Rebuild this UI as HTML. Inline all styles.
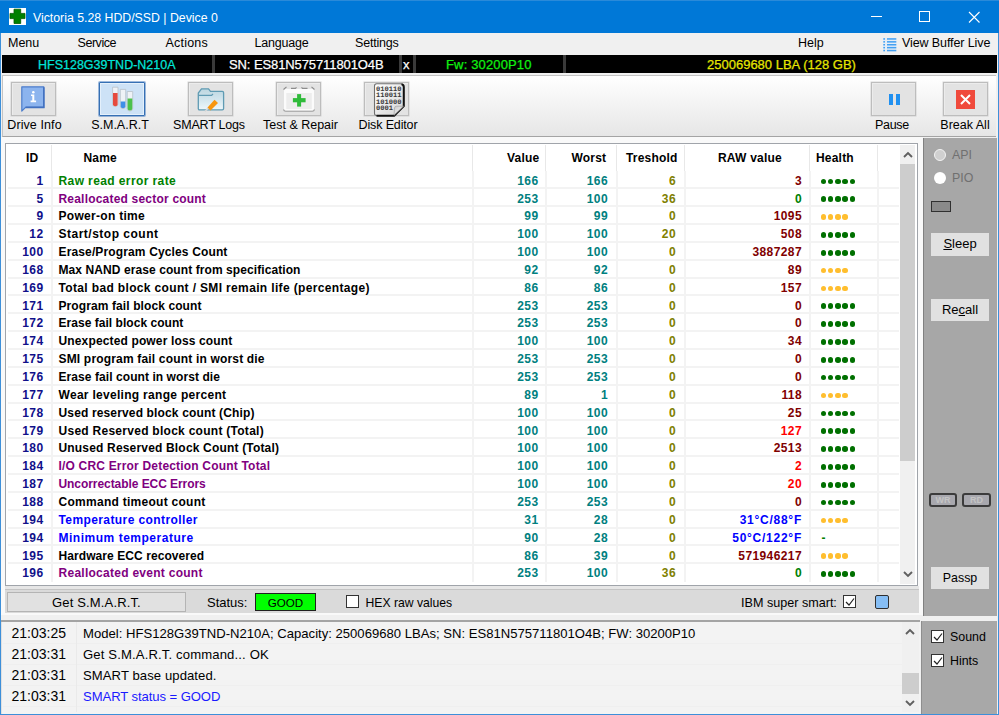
<!DOCTYPE html>
<html><head><meta charset="utf-8">
<style>
*{margin:0;padding:0;box-sizing:border-box}
html,body{width:999px;height:715px;overflow:hidden;background:#f0f0f0;font-family:"Liberation Sans",sans-serif;position:relative}
.a{position:absolute;white-space:nowrap}
#title{left:0;top:0;width:999px;height:33px;background:#0078d7}
#menubar{left:1px;top:33px;width:997px;height:22px;background:#f0f0f0}
.mi{position:absolute;top:36px;font-size:12.5px;color:#000;line-height:14px}
#bbar{left:2px;top:55px;width:995px;height:18px;background:#000}
.bt{position:absolute;top:56.8px;font-size:13px;line-height:16px;-webkit-text-stroke:0.25px currentColor}
.sep{position:absolute;top:55px;height:18px;width:3px;background:#3a3a3a}
#tool{left:2px;top:75px;width:994px;height:62px;background:linear-gradient(#ffffff,#e6e6e6);border-top:1px solid #c4c4c4;border-left:1px solid #c4c4c4;border-bottom:1px solid #a4a4a4}
.tb{position:absolute;top:82px;width:45px;height:34px;background:#e3e3e3;border:1px solid #bdbdbd;box-shadow:0 0 0 0.5px rgba(180,180,180,0.5),inset 1px 1px 0 #ececec}
.tl{position:absolute;top:116.7px;font-size:12.5px;line-height:16px;color:#000;text-align:center;width:100px}
#tbl{left:5px;top:143px;width:913px;height:443px;background:#fff;border:1px solid #a0a4aa}
.hdr{position:absolute;top:150px;font-size:12px;font-weight:700;line-height:16px;color:#000;letter-spacing:0.2px}
.vg{position:absolute;top:171px;width:2px;height:411px;background:#f3f3f3}
.vh{position:absolute;top:145px;width:1px;height:26px;background:#e8e8e8}
.hg{position:absolute;left:8px;width:891px;height:2px;background:#f3f3f3}
.row{position:absolute;left:0;width:900px;height:17.85px}
.c{position:absolute;top:1.8px;font-size:12px;font-weight:700;line-height:17.85px;white-space:nowrap}
.id{left:0;width:43.5px;text-align:right;color:#10108a;letter-spacing:0.4px}
.nm{left:58.5px;letter-spacing:0.35px}
.val{left:460px;width:78.5px;text-align:right;color:#008080;letter-spacing:0.4px}
.wst{left:540px;width:68px;text-align:right;color:#008080;letter-spacing:0.4px}
.thr{left:600px;width:76px;text-align:right;color:#808000;letter-spacing:0.4px}
.raw{left:690px;width:112px;text-align:right;letter-spacing:0.4px}
.hl{left:820.5px;top:0;height:17.85px}
.dg,.dy{position:relative;display:inline-block;width:5.6px;height:5.6px;border-radius:50%;margin-right:1.7px;top:1.6px;vertical-align:middle}
.dg{background:#007000}
.dy{background:#ffbe2e}
.dash{position:relative;top:1.8px;color:#008000;font-size:12px;font-weight:700;margin-left:1px;line-height:17.85px}
#sb1{left:899.5px;top:145px;width:15.5px;height:439px;background:#f0f0f0}
#thumb1{left:899.5px;top:164px;width:15.5px;height:297px;background:#cdcdcd}
#rpanel{left:923px;top:138px;width:74px;height:478px;background:#a7a7a7;border-left:1px solid #808080}
.pb{position:absolute;background:#e1e1e1;font-size:13px;line-height:22px;text-align:center;color:#000}
#status{left:5px;top:586px;width:914px;height:27px;background:#dadada;border-top:3px solid #e6e6e6;box-shadow:inset 0 1px 0 #c4c4c4}
#log{left:1px;top:620px;width:919px;height:94px;background:#f3f3f3;border-top:2px solid #a4a4a4;box-shadow:inset 1px 0 0 #e0e0e0}
.lt{position:absolute;font-size:13.1px;line-height:21px;color:#000}
.lg{position:absolute;left:3px;width:899px;height:1px;background:#efefef}
#lpanel{left:921px;top:621px;width:76px;height:93px;background:#a8a8a8;border-left:1px solid #8e8e8e}
.cb{position:absolute;width:13px;height:13px;background:#fff;border:1px solid #333}
</style></head><body>
<!-- title bar -->
<div class="a" id="title"></div>
<div class="a" style="left:0;top:0;width:999px;height:1px;background:#2a8ad9"></div>
<div class="a" style="left:9px;top:8px;width:17px;height:17px;background:#fff"></div>
<svg class="a" style="left:9px;top:8px" width="17" height="17" viewBox="0 0 17 17"><path d="M5 1.2H11.7V5.4H16V10.6H11.7V15.5H5V10.6H1V5.4H5Z" fill="#008000" stroke="#005a00" stroke-width="0.8"/></svg>
<div class="a" style="left:33px;top:9.7px;font-size:12.3px;line-height:16px;color:#fff">Victoria 5.28 HDD/SSD | Device 0</div>
<div class="a" style="left:871px;top:16px;width:11px;height:1px;background:#fff"></div>
<div class="a" style="left:919px;top:11px;width:11px;height:11px;border:1px solid #fff"></div>
<svg class="a" style="left:968px;top:10.5px" width="13" height="13" viewBox="0 0 13 13"><path d="M1 1L11.5 11.5M11.5 1L1 11.5" stroke="#fff" stroke-width="1.1"/></svg>
<!-- window border -->
<div class="a" style="left:0;top:33px;width:1px;height:682px;background:#3d8fd9"></div>
<div class="a" style="left:998px;top:33px;width:1px;height:682px;background:#3d8fd9"></div>
<div class="a" style="left:0;top:714px;width:999px;height:1px;background:#3d8fd9"></div>

<!-- menu -->
<div class="a" id="menubar"></div>
<span class="mi" style="left:8px">Menu</span>
<span class="mi" style="left:77.5px;letter-spacing:-0.45px">Service</span>
<span class="mi" style="left:165.5px;letter-spacing:0.2px">Actions</span>
<span class="mi" style="left:254.5px;letter-spacing:-0.2px">Language</span>
<span class="mi" style="left:355px;letter-spacing:-0.2px">Settings</span>
<span class="mi" style="left:798px">Help</span>
<svg class="a" style="left:883px;top:38px" width="14" height="14" viewBox="0 0 14 14"><rect x="0" y="0" width="13.5" height="13.5" fill="#dcebfa" opacity="0.6"/><g fill="#43a0f2"><rect x="0.3" y="0.2" width="1.7" height="1.5"/><rect x="4" y="0.2" width="9.3" height="1.5"/><rect x="0.3" y="3.1" width="1.7" height="1.5"/><rect x="4" y="3.1" width="9.3" height="1.5"/><rect x="0.3" y="6.0" width="1.7" height="1.5"/><rect x="4" y="6.0" width="9.3" height="1.5"/><rect x="0.3" y="8.9" width="1.7" height="1.5"/><rect x="4" y="8.9" width="9.3" height="1.5"/><rect x="0.3" y="11.8" width="1.7" height="1.5"/><rect x="4" y="11.8" width="9.3" height="1.5"/></g></svg>
<span class="mi" style="left:902px;letter-spacing:-0.1px">View Buffer Live</span>

<!-- black info bar -->
<div class="a" id="bbar"></div>
<div class="sep" style="left:212px"></div>
<div class="sep" style="left:399px"></div>
<div class="sep" style="left:413px"></div>
<div class="sep" style="left:563px"></div>
<span class="bt" style="left:38px;color:#00e4d8;font-size:12.5px">HFS128G39TND-N210A</span>
<span class="bt" style="left:229px;color:#fff;letter-spacing:-0.1px">SN: ES81N575711801O4B</span>
<span class="bt" style="left:403px;color:#fff">x</span>
<span class="bt" style="left:446px;color:#10f010;letter-spacing:0.15px">Fw: 30200P10</span>
<span class="bt" style="left:707px;color:#e6e600">250069680 LBA (128 GB)</span>

<!-- toolbar -->
<div class="a" id="tool"></div>
<div class="tb" style="left:11px"></div>
<div class="tb" style="left:99px;width:46px;background:#cde2f6;border:1px solid #3670b4;border-radius:1px;box-shadow:0 0 0 1px rgba(64,120,190,0.5),inset 0 0 0 1px #e4f0fb"></div>
<div class="tb" style="left:188px"></div>
<div class="tb" style="left:276px"></div>
<div class="tb" style="left:364px"></div>
<div class="tb" style="left:871px"></div>
<div class="tb" style="left:943px"></div>
<!-- icons -->
<svg class="a" style="left:21px;top:86px" width="24" height="26" viewBox="0 0 24 26">
<path d="M0.8 0.8H22.8V21.4H4.6L0.8 25Z" fill="#8cb4ee" stroke="#4d7dcb" stroke-width="1.2" stroke-linejoin="round"/>
<path d="M22.8 1.2V21.4H4.6" fill="none" stroke="#4271c0" stroke-width="1.6"/>
<circle cx="12.3" cy="6.2" r="1.25" fill="#fff"/>
<path d="M10 8.6H13.3V14.6H15.1V16.3H9.6V14.6H11.3V10.1H10Z" fill="#fff"/></svg>
<svg class="a" style="left:112px;top:86px" width="22" height="26" viewBox="0 0 22 26">
<path d="M0.6 1.2H6V18.2Q6 20.6 3.3 20.6Q0.6 20.6 0.6 18.2Z" fill="#eef2f6" stroke="#b8c0c8" stroke-width="0.8"/><path d="M1 7H5.6V18.2Q5.6 20.2 3.3 20.2Q1 20.2 1 18.2Z" fill="#e64a3e"/>
<path d="M8.3 3.4H13.7V20.2Q13.7 22.6 11 22.6Q8.3 22.6 8.3 20.2Z" fill="#eef2f6" stroke="#b8c0c8" stroke-width="0.8"/><path d="M8.7 15.5H13.3V20.2Q13.3 22.2 11 22.2Q8.7 22.2 8.7 20.2Z" fill="#3f8fe8"/>
<path d="M15.2 5.5H20.7V22.6Q20.7 25 18 25Q15.2 25 15.2 22.6Z" fill="#eef2f6" stroke="#b8c0c8" stroke-width="0.8"/><path d="M15.6 12.6H20.3V22.6Q20.3 24.6 18 24.6Q15.6 24.6 15.6 22.6Z" fill="#4cc14c"/></svg>
<svg class="a" style="left:197px;top:87px" width="28" height="26" viewBox="0 0 28 26">
<defs><linearGradient id="fg" x1="0" y1="0" x2="0" y2="1"><stop offset="0" stop-color="#bcd6e0"/><stop offset="0.5" stop-color="#d2e6ee"/><stop offset="1" stop-color="#eef7fa"/></linearGradient></defs>
<path d="M1.3 22V6L4.5 1.9H11.5L13.5 4.4H25.3Q26.6 4.4 26.6 5.8V21.5Q26.6 22.8 25.3 22.8H2.6Q1.3 22.8 1.3 21.5Z" fill="url(#fg)" stroke="#5f9bb3" stroke-width="1.3"/>
<path d="M1.3 8.4H14.5L16 7" fill="none" stroke="#5f9bb3" stroke-width="1.3"/>
<path d="M12 21.5L8.5 25L7.5 24L10.5 20.5Z" fill="#d8d8d8"/>
<path d="M10.5 20.5L17.5 12.7L21 16L13.5 23.5Z" fill="#f7960f"/></svg>
<svg class="a" style="left:282px;top:85px" width="34" height="28" viewBox="0 0 34 28">
<path d="M2 5.5Q2 4 3.5 4H30.5Q32 4 32 5.5V24Q32 25.5 30.5 25.5H3.5Q2 25.5 2 24Z" fill="#fbfbfb"/>
<rect x="4.3" y="8" width="25.5" height="16" fill="#ededed"/>
<path d="M1.5 4.5L4.5 1.8M32.5 4.5L29.5 1.8" stroke="#8c8c8c" stroke-width="1.1"/>
<path d="M9 3.3H13.5L14.5 2.3M19.5 2.3L20.5 3.3H25.5" fill="none" stroke="#8c8c8c" stroke-width="1.2"/>
<path d="M1.5 24.5Q2 26.2 3.5 26.2H30.5Q32 26.2 32.5 24.5" fill="none" stroke="#a0a0a0" stroke-width="1.1"/>
<rect x="15.1" y="9.1" width="4" height="12.5" fill="#2fbb3a"/><rect x="10.9" y="13.1" width="12.7" height="4.2" fill="#2fbb3a"/></svg>
<svg class="a" style="left:373px;top:82px" width="33" height="35" viewBox="0 0 33 35">
<defs><linearGradient id="dg" x1="0" y1="0" x2="1" y2="1"><stop offset="0" stop-color="#ffffff"/><stop offset="1" stop-color="#d4d4d4"/></linearGradient>
<linearGradient id="de" x1="0" y1="0" x2="1" y2="1"><stop offset="0" stop-color="#c8c8c8"/><stop offset="1" stop-color="#ffffff"/></linearGradient></defs>
<path d="M1.5 4Q1.5 1.8 3.7 1.8H27.5Q30.5 1.8 30.5 4.8V24L21 33.5H3.7Q1.5 33.5 1.5 31.3Z" fill="url(#dg)" stroke="#707070" stroke-width="1.1"/>
<path d="M28.5 2.2Q30.8 2.5 30.8 5V24.2L21.2 33.8H3.5" fill="none" stroke="#111" stroke-width="2"/>
<g font-family="Liberation Mono" font-size="6.8" font-weight="700" fill="#3a3a3a" style="text-rendering:geometricPrecision;-webkit-font-smoothing:antialiased">
<text x="3" y="8.9" textLength="25.5" lengthAdjust="spacingAndGlyphs">010110</text>
<text x="3" y="15.2" textLength="25.5" lengthAdjust="spacingAndGlyphs">110011</text>
<text x="3" y="21.6" textLength="25.5" lengthAdjust="spacingAndGlyphs">101000</text>
<text x="3" y="27.9" textLength="17" lengthAdjust="spacingAndGlyphs">0001</text></g>
<path d="M21 33.3L21.5 26Q21.8 24.2 23.5 24.2H30.5Z" fill="url(#de)" stroke="#9a9a9a" stroke-width="0.6"/></svg>
<div class="a" style="left:889px;top:94px;width:4px;height:11px;background:#2090f0"></div>
<div class="a" style="left:896px;top:94px;width:4px;height:11px;background:#2090f0"></div>
<div class="a" style="left:956px;top:90px;width:19px;height:19px;background:#f04a3c"></div>
<svg class="a" style="left:956px;top:90px" width="19" height="19" viewBox="0 0 19 19"><path d="M5 5L14 14M14 5L5 14" stroke="#fff" stroke-width="2"/></svg>
<span class="tl" style="left:-15.5px;letter-spacing:0.1px">Drive Info</span>
<span class="tl" style="left:70px">S.M.A.R.T</span>
<span class="tl" style="left:159px;letter-spacing:-0.2px">SMART Logs</span>
<span class="tl" style="left:250.5px">Test &amp; Repair</span>
<span class="tl" style="left:338px;letter-spacing:-0.15px">Disk Editor</span>
<span class="tl" style="left:842px;letter-spacing:-0.3px">Pause</span>
<span class="tl" style="left:915px">Break All</span>

<!-- table -->
<div class="a" style="left:1px;top:137px;width:922px;height:478px;background:#f9f9f9"></div>
<div class="a" id="tbl"></div>
<div class="a" style="left:7px;top:145px;width:892px;height:26px;background:#fff"></div>
<div class="vh" style="left:51px"></div>
<div class="vh" style="left:472px"></div>
<div class="vh" style="left:545px"></div>
<div class="vh" style="left:616px"></div>
<div class="vh" style="left:684px"></div>
<div class="vh" style="left:809px"></div>
<div class="vh" style="left:877px"></div>
<div class="vg" style="left:51px"></div>
<div class="vg" style="left:472px"></div>
<div class="vg" style="left:545px"></div>
<div class="vg" style="left:616px"></div>
<div class="vg" style="left:684px"></div>
<div class="vg" style="left:809px"></div>
<div class="vg" style="left:877px"></div>
<div class="hg" style="top:187.35px"></div>
<div class="hg" style="top:205.20px"></div>
<div class="hg" style="top:223.05px"></div>
<div class="hg" style="top:240.90px"></div>
<div class="hg" style="top:258.75px"></div>
<div class="hg" style="top:276.60px"></div>
<div class="hg" style="top:294.45px"></div>
<div class="hg" style="top:312.30px"></div>
<div class="hg" style="top:330.15px"></div>
<div class="hg" style="top:348.00px"></div>
<div class="hg" style="top:365.85px"></div>
<div class="hg" style="top:383.70px"></div>
<div class="hg" style="top:401.55px"></div>
<div class="hg" style="top:419.40px"></div>
<div class="hg" style="top:437.25px"></div>
<div class="hg" style="top:455.10px"></div>
<div class="hg" style="top:472.95px"></div>
<div class="hg" style="top:490.80px"></div>
<div class="hg" style="top:508.65px"></div>
<div class="hg" style="top:526.50px"></div>
<div class="hg" style="top:544.35px"></div>
<div class="hg" style="top:562.20px"></div>
<span class="hdr" style="left:26px">ID</span>
<span class="hdr" style="left:83.5px">Name</span>
<span class="hdr" style="left:507px">Value</span>
<span class="hdr" style="left:571.5px">Worst</span>
<span class="hdr" style="left:626px">Treshold</span>
<span class="hdr" style="left:718px">RAW value</span>
<span class="hdr" style="left:816px">Health</span>
<div class="row" style="top:170.90px"><span class="c id">1</span><span class="c nm" style="color:#008000;letter-spacing:0.4px">Raw read error rate</span><span class="c val">166</span><span class="c wst">166</span><span class="c thr">6</span><span class="c raw" style="color:#800000">3</span><span class="c hl"><i class="dg"></i><i class="dg"></i><i class="dg"></i><i class="dg"></i><i class="dg"></i></span></div>
<div class="row" style="top:188.75px"><span class="c id">5</span><span class="c nm" style="color:#800080;letter-spacing:0.202px">Reallocated sector count</span><span class="c val">253</span><span class="c wst">100</span><span class="c thr">36</span><span class="c raw" style="color:#008000">0</span><span class="c hl"><i class="dg"></i><i class="dg"></i><i class="dg"></i><i class="dg"></i><i class="dg"></i></span></div>
<div class="row" style="top:206.60px"><span class="c id">9</span><span class="c nm" style="color:#000000;letter-spacing:0.292px">Power-on time</span><span class="c val">99</span><span class="c wst">99</span><span class="c thr">0</span><span class="c raw" style="color:#800000">1095</span><span class="c hl"><i class="dy"></i><i class="dy"></i><i class="dy"></i><i class="dy"></i></span></div>
<div class="row" style="top:224.45px"><span class="c id">12</span><span class="c nm" style="color:#000000;letter-spacing:0.497px">Start/stop count</span><span class="c val">100</span><span class="c wst">100</span><span class="c thr">20</span><span class="c raw" style="color:#800000">508</span><span class="c hl"><i class="dg"></i><i class="dg"></i><i class="dg"></i><i class="dg"></i><i class="dg"></i></span></div>
<div class="row" style="top:242.30px"><span class="c id">100</span><span class="c nm" style="color:#000000;letter-spacing:0.138px">Erase/Program Cycles Count</span><span class="c val">100</span><span class="c wst">100</span><span class="c thr">0</span><span class="c raw" style="color:#800000">3887287</span><span class="c hl"><i class="dg"></i><i class="dg"></i><i class="dg"></i><i class="dg"></i><i class="dg"></i></span></div>
<div class="row" style="top:260.15px"><span class="c id">168</span><span class="c nm" style="color:#000000;letter-spacing:0.084px">Max NAND erase count from specification</span><span class="c val">92</span><span class="c wst">92</span><span class="c thr">0</span><span class="c raw" style="color:#800000">89</span><span class="c hl"><i class="dy"></i><i class="dy"></i><i class="dy"></i><i class="dy"></i></span></div>
<div class="row" style="top:278.00px"><span class="c id">169</span><span class="c nm" style="color:#000000;letter-spacing:0.35px">Total bad block count / SMI remain life (percentage)</span><span class="c val">86</span><span class="c wst">86</span><span class="c thr">0</span><span class="c raw" style="color:#800000">157</span><span class="c hl"><i class="dy"></i><i class="dy"></i><i class="dy"></i><i class="dy"></i></span></div>
<div class="row" style="top:295.85px"><span class="c id">171</span><span class="c nm" style="color:#000000;letter-spacing:0.098px">Program fail block count</span><span class="c val">253</span><span class="c wst">253</span><span class="c thr">0</span><span class="c raw" style="color:#800000">0</span><span class="c hl"><i class="dg"></i><i class="dg"></i><i class="dg"></i><i class="dg"></i><i class="dg"></i></span></div>
<div class="row" style="top:313.70px"><span class="c id">172</span><span class="c nm" style="color:#000000;letter-spacing:0.036px">Erase fail block count</span><span class="c val">253</span><span class="c wst">253</span><span class="c thr">0</span><span class="c raw" style="color:#800000">0</span><span class="c hl"><i class="dg"></i><i class="dg"></i><i class="dg"></i><i class="dg"></i><i class="dg"></i></span></div>
<div class="row" style="top:331.55px"><span class="c id">174</span><span class="c nm" style="color:#000000;letter-spacing:0.142px">Unexpected power loss count</span><span class="c val">100</span><span class="c wst">100</span><span class="c thr">0</span><span class="c raw" style="color:#800000">34</span><span class="c hl"><i class="dg"></i><i class="dg"></i><i class="dg"></i><i class="dg"></i><i class="dg"></i></span></div>
<div class="row" style="top:349.40px"><span class="c id">175</span><span class="c nm" style="color:#000000;letter-spacing:0.176px">SMI program fail count in worst die</span><span class="c val">253</span><span class="c wst">253</span><span class="c thr">0</span><span class="c raw" style="color:#800000">0</span><span class="c hl"><i class="dg"></i><i class="dg"></i><i class="dg"></i><i class="dg"></i><i class="dg"></i></span></div>
<div class="row" style="top:367.25px"><span class="c id">176</span><span class="c nm" style="color:#000000;letter-spacing:0.071px">Erase fail count in worst die</span><span class="c val">253</span><span class="c wst">253</span><span class="c thr">0</span><span class="c raw" style="color:#800000">0</span><span class="c hl"><i class="dg"></i><i class="dg"></i><i class="dg"></i><i class="dg"></i><i class="dg"></i></span></div>
<div class="row" style="top:385.10px"><span class="c id">177</span><span class="c nm" style="color:#000000;letter-spacing:0.296px">Wear leveling range percent</span><span class="c val">89</span><span class="c wst">1</span><span class="c thr">0</span><span class="c raw" style="color:#800000">118</span><span class="c hl"><i class="dy"></i><i class="dy"></i><i class="dy"></i><i class="dy"></i></span></div>
<div class="row" style="top:402.95px"><span class="c id">178</span><span class="c nm" style="color:#000000;letter-spacing:0.147px">Used reserved block count (Chip)</span><span class="c val">100</span><span class="c wst">100</span><span class="c thr">0</span><span class="c raw" style="color:#800000">25</span><span class="c hl"><i class="dg"></i><i class="dg"></i><i class="dg"></i><i class="dg"></i><i class="dg"></i></span></div>
<div class="row" style="top:420.80px"><span class="c id">179</span><span class="c nm" style="color:#000000;letter-spacing:0.272px">Used Reserved block count (Total)</span><span class="c val">100</span><span class="c wst">100</span><span class="c thr">0</span><span class="c raw" style="color:#ff0000">127</span><span class="c hl"><i class="dg"></i><i class="dg"></i><i class="dg"></i><i class="dg"></i><i class="dg"></i></span></div>
<div class="row" style="top:438.65px"><span class="c id">180</span><span class="c nm" style="color:#000000;letter-spacing:0.176px">Unused Reserved Block Count (Total)</span><span class="c val">100</span><span class="c wst">100</span><span class="c thr">0</span><span class="c raw" style="color:#800000">2513</span><span class="c hl"><i class="dg"></i><i class="dg"></i><i class="dg"></i><i class="dg"></i><i class="dg"></i></span></div>
<div class="row" style="top:456.50px"><span class="c id">184</span><span class="c nm" style="color:#800080;letter-spacing:0.188px">I/O CRC Error Detection Count Total</span><span class="c val">100</span><span class="c wst">100</span><span class="c thr">0</span><span class="c raw" style="color:#ff0000">2</span><span class="c hl"><i class="dg"></i><i class="dg"></i><i class="dg"></i><i class="dg"></i><i class="dg"></i></span></div>
<div class="row" style="top:474.35px"><span class="c id">187</span><span class="c nm" style="color:#800080;letter-spacing:-0.063px">Uncorrectable ECC Errors</span><span class="c val">100</span><span class="c wst">100</span><span class="c thr">0</span><span class="c raw" style="color:#ff0000">20</span><span class="c hl"><i class="dg"></i><i class="dg"></i><i class="dg"></i><i class="dg"></i><i class="dg"></i></span></div>
<div class="row" style="top:492.20px"><span class="c id">188</span><span class="c nm" style="color:#000000;letter-spacing:0.275px">Command timeout count</span><span class="c val">253</span><span class="c wst">253</span><span class="c thr">0</span><span class="c raw" style="color:#800000">0</span><span class="c hl"><i class="dg"></i><i class="dg"></i><i class="dg"></i><i class="dg"></i><i class="dg"></i></span></div>
<div class="row" style="top:510.05px"><span class="c id">194</span><span class="c nm" style="color:#0000ff;letter-spacing:0.402px">Temperature controller</span><span class="c val">31</span><span class="c wst">28</span><span class="c thr">0</span><span class="c raw" style="color:#0000ff;letter-spacing:0.75px">31°C/88°F</span><span class="c hl"><i class="dy"></i><i class="dy"></i><i class="dy"></i><i class="dy"></i></span></div>
<div class="row" style="top:527.90px"><span class="c id">194</span><span class="c nm" style="color:#0000ff;letter-spacing:0.517px">Minimum temperature</span><span class="c val">90</span><span class="c wst">28</span><span class="c thr">0</span><span class="c raw" style="color:#0000ff;letter-spacing:0.75px">50°C/122°F</span><span class="c hl"><span class="dash">-</span></span></div>
<div class="row" style="top:545.75px"><span class="c id">195</span><span class="c nm" style="color:#000000;letter-spacing:0.074px">Hardware ECC recovered</span><span class="c val">86</span><span class="c wst">39</span><span class="c thr">0</span><span class="c raw" style="color:#800000">571946217</span><span class="c hl"><i class="dy"></i><i class="dy"></i><i class="dy"></i><i class="dy"></i></span></div>
<div class="row" style="top:563.60px"><span class="c id">196</span><span class="c nm" style="color:#800080;letter-spacing:0.268px">Reallocated event count</span><span class="c val">253</span><span class="c wst">100</span><span class="c thr">36</span><span class="c raw" style="color:#008000">0</span><span class="c hl"><i class="dg"></i><i class="dg"></i><i class="dg"></i><i class="dg"></i><i class="dg"></i></span></div>
<div class="a" id="sb1"></div>
<div class="a" id="thumb1"></div>
<svg class="a" style="left:902px;top:150px" width="12" height="10" viewBox="0 0 12 10"><path d="M2 7L6 3L10 7" fill="none" stroke="#606060" stroke-width="1.9"/></svg>
<svg class="a" style="left:902px;top:569px" width="12" height="10" viewBox="0 0 12 10"><path d="M2 3L6 7L10 3" fill="none" stroke="#606060" stroke-width="1.9"/></svg>

<!-- right panel -->
<div class="a" id="rpanel"></div>
<div class="a" style="left:934px;top:149px;width:12px;height:12px;border-radius:50%;background:#d0d0d0;border:1.5px solid #f4f4f4"></div>
<div class="a" style="left:934px;top:172px;width:12px;height:12px;border-radius:50%;background:#fff"></div>
<span class="a" style="left:952px;top:147px;font-size:12.4px;line-height:16px;color:#707070">API</span>
<span class="a" style="left:952px;top:170px;font-size:12.4px;line-height:16px;color:#707070">PIO</span>
<div class="a" style="left:931px;top:201px;width:20px;height:11px;background:#8a8a8a;border:1px solid #303030"></div>
<div class="pb a" style="left:931px;top:233px;width:58px;height:23px"><u>S</u>leep</div>
<div class="pb a" style="left:931px;top:299px;width:58px;height:22px">Re<u>c</u>all</div>
<div class="a" style="left:929px;top:493px;width:28px;height:14px;border:2px solid #3c3c3c;border-radius:3px;background:#a8a8ae;font-size:9px;font-weight:700;color:#c4c4c4;text-align:center;line-height:10px">WR</div>
<div class="a" style="left:962px;top:493px;width:29px;height:14px;border:2px solid #3c3c3c;border-radius:3px;background:#a8a8ae;font-size:9px;font-weight:700;color:#c4c4c4;text-align:center;line-height:10px">RD</div>
<div class="pb a" style="left:931px;top:567px;width:58px;height:22px;font-size:12.4px">Passp</div>

<!-- status strip -->
<div class="a" id="status"></div>
<div class="a" style="left:7px;top:592px;width:179px;height:20px;background:#e1e1e1;border:1px solid #b4b4b4;font-size:13px;line-height:20px;text-align:center;letter-spacing:0.15px">Get S.M.A.R.T.</div>
<span class="a" style="left:207px;top:595px;font-size:13px;line-height:16px">Status:</span>
<div class="a" style="left:255px;top:593px;width:61px;height:18px;background:#00ff00;border:1px solid #202020;font-size:11.6px;line-height:17px;text-align:center">GOOD</div>
<div class="cb" style="left:346px;top:595px;border-color:#333"></div>
<span class="a" style="left:365.5px;top:595px;font-size:12.2px;line-height:16px">HEX raw values</span>
<span class="a" style="left:741px;top:595px;font-size:12.6px;line-height:16px">IBM super smart:</span>
<div class="cb" style="left:843px;top:595px"></div>
<svg class="a" style="left:845px;top:597px" width="10" height="10" viewBox="0 0 10 10"><path d="M1 5L4 8L9 1.5" fill="none" stroke="#222" stroke-width="1.2"/></svg>
<div class="a" style="left:875px;top:595px;width:14px;height:14px;background:#86bef5;border:1px solid #303030;border-radius:2px"></div>

<!-- log -->
<div class="a" id="log"></div>
<div class="lg" style="top:643px"></div>
<div class="lg" style="top:664px"></div>
<div class="lg" style="top:685px"></div>
<div class="lg" style="top:706px"></div>
<div class="a" style="left:76px;top:622px;width:1px;height:90px;background:#eaeaea"></div>
<span class="lt" style="left:11.5px;top:623px;font-size:14px">21:03:25</span>
<span class="lt" style="left:11.5px;top:644px;font-size:14px">21:03:31</span>
<span class="lt" style="left:11.5px;top:665px;font-size:14px">21:03:31</span>
<span class="lt" style="left:11.5px;top:686px;font-size:14px">21:03:31</span>
<span class="lt" style="left:83px;top:623px">Model: HFS128G39TND-N210A; Capacity: 250069680 LBAs; SN: ES81N575711801O4B; FW: 30200P10</span>
<span class="lt" style="left:83px;top:644px;letter-spacing:0.14px">Get S.M.A.R.T. command... OK</span>
<span class="lt" style="left:83px;top:665px;letter-spacing:0.08px">SMART base updated.</span>
<span class="lt" style="left:83px;top:686px;color:#1a1aff;letter-spacing:-0.08px">SMART status = GOOD</span>
<div class="a" style="left:902px;top:622px;width:17px;height:90px;background:#f0f0f0"></div>
<div class="a" style="left:902px;top:673px;width:17px;height:21px;background:#cdcdcd"></div>
<svg class="a" style="left:904px;top:627px" width="12" height="10" viewBox="0 0 12 10"><path d="M2 7L6 3L10 7" fill="none" stroke="#606060" stroke-width="1.9"/></svg>
<svg class="a" style="left:904px;top:698px" width="12" height="10" viewBox="0 0 12 10"><path d="M2 3L6 7L10 3" fill="none" stroke="#606060" stroke-width="1.9"/></svg>
<div class="a" id="lpanel"></div>
<div class="cb" style="left:931px;top:630px"></div>
<svg class="a" style="left:933px;top:632px" width="10" height="10" viewBox="0 0 10 10"><path d="M1 5L4 8L9 1.5" fill="none" stroke="#222" stroke-width="1.2"/></svg>
<span class="a" style="left:950px;top:629px;font-size:12.4px;line-height:16px">Sound</span>
<div class="cb" style="left:931px;top:654px"></div>
<svg class="a" style="left:933px;top:656px" width="10" height="10" viewBox="0 0 10 10"><path d="M1 5L4 8L9 1.5" fill="none" stroke="#222" stroke-width="1.2"/></svg>
<span class="a" style="left:950px;top:653px;font-size:12.4px;line-height:16px">Hints</span>
</body></html>
